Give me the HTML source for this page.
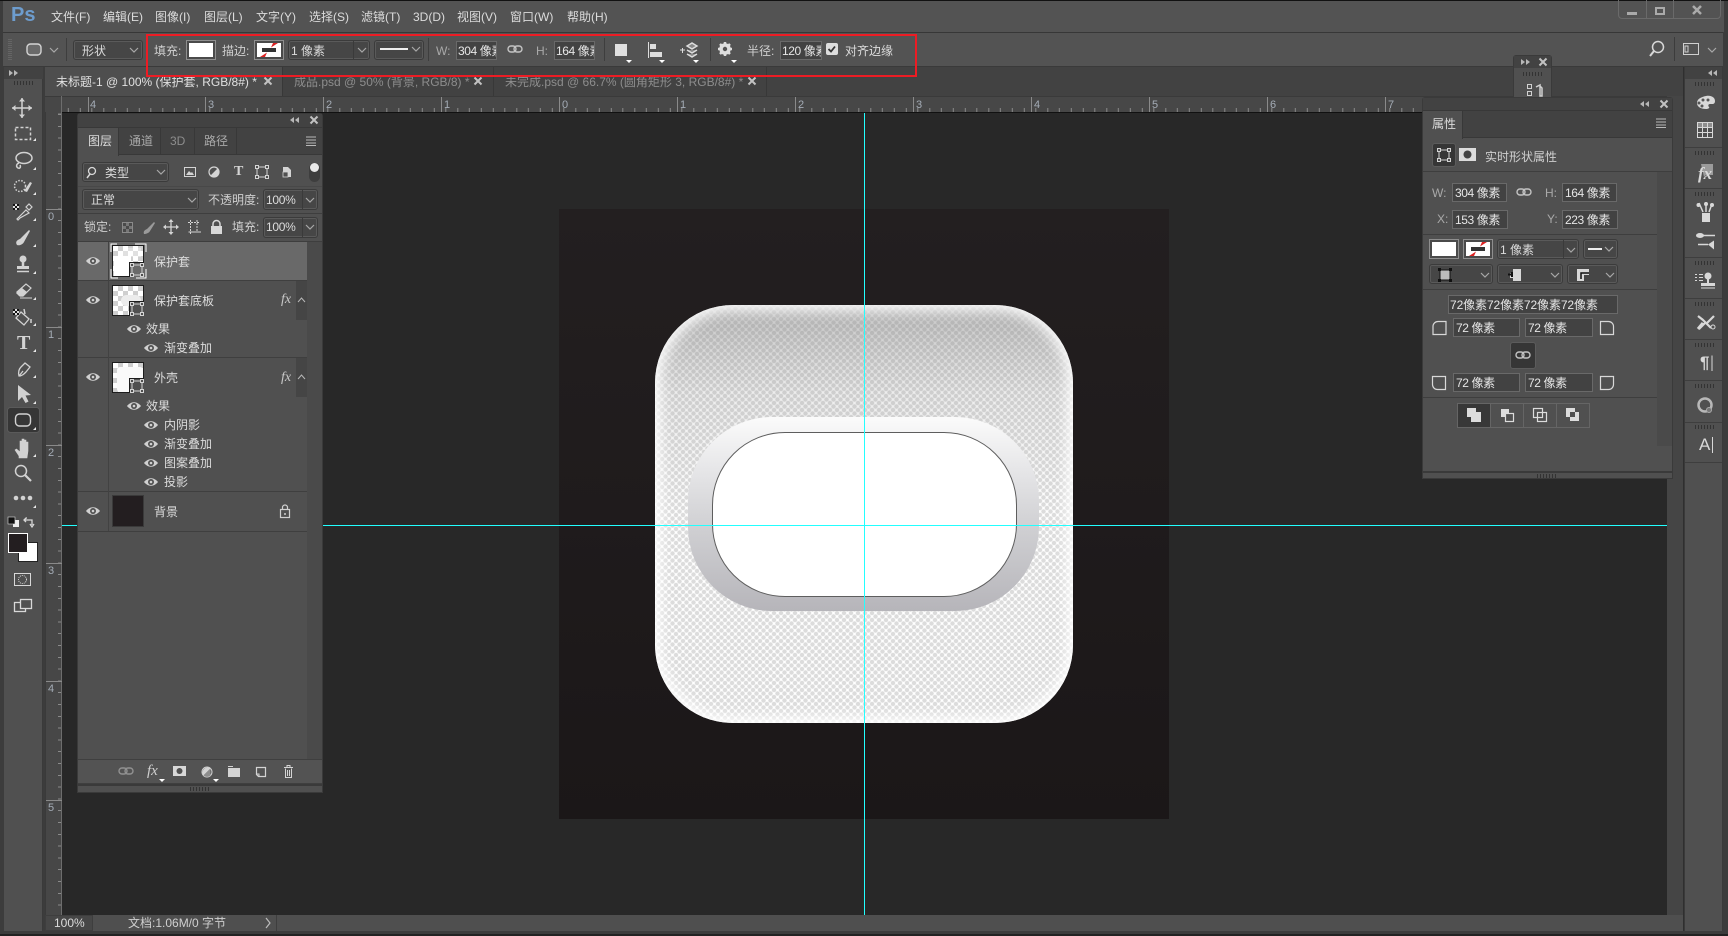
<!DOCTYPE html>
<html lang="zh"><head><meta charset="utf-8"><title>Photoshop</title>
<style>
html,body{margin:0;padding:0;width:1728px;height:936px;overflow:hidden;background:#3c3c3c}
body{position:relative;font-family:"Liberation Sans","Noto Sans CJK SC",sans-serif;font-size:12px;color:#dcdcdc}
div{position:absolute;box-sizing:border-box}
.t{white-space:nowrap;line-height:16px;height:16px}
.g{color:#a9a9a9}
.dd{background:#464646;border:1px solid #3b3b3b;border-radius:3px;box-shadow:0 0 0 1px #5a5a5a inset}
.in{background:#424242;border:1px solid #696969;overflow:hidden;white-space:nowrap;line-height:19px;padding-left:1px;color:#e6e6e6;letter-spacing:-.4px}
.sw{background:#fff;border:3px solid #4a4a4a;outline:1px solid #8e8e8e;outline-offset:-1px}
.sep{background:#3e3e3e;height:1px}
.r{font-size:11px;color:#a4acb6;line-height:12px}
.check{background:conic-gradient(#cfcfcf 25%,#fff 0 50%,#cfcfcf 0 75%,#fff 0) 0 0/10px 10px}
.th{border:1px solid #1d1d1d}
.ov{background:#505050;width:15px;height:15px;right:-1px;bottom:-1px;border-left:1px solid #1d1d1d;border-top:1px solid #1d1d1d}
.grip{height:4px;background:repeating-linear-gradient(90deg,#333 0 1px,transparent 1px 3px)}
</style></head><body>

<!-- outer frames -->
<div style="left:0;top:0;width:1728px;height:1px;background:#111"></div>
<div style="left:3px;top:1px;width:1721px;height:31px;background:#535353"></div>
<div style="left:3px;top:33px;width:1720px;height:33px;background:#535353"></div>
<div style="left:3px;top:32px;width:1720px;height:1px;background:#373737"></div>
<div style="left:3px;top:66px;width:1720px;height:1px;background:#3a3a3a"></div>

<!-- tool column -->
<div style="left:4px;top:67px;width:39px;height:864px;background:#505050;border-right:1px solid #3a3a3a"></div>
<div style="left:4px;top:67px;width:39px;height:12px;background:#424242"></div>
<div class="grip" style="left:14px;top:81px;width:20px"></div>

<!-- tabs -->
<div style="left:45px;top:67px;width:1638px;height:29px;background:#424242"></div>
<div style="left:45px;top:67px;width:237px;height:29px;background:#4e4e4e"></div>
<div style="left:282px;top:67px;width:1px;height:29px;background:#383838"></div>
<div style="left:493px;top:67px;width:1px;height:29px;background:#383838"></div>
<div style="left:766px;top:67px;width:1px;height:29px;background:#383838"></div>
<div class="t" style="left:56px;top:74px;color:#e0e0e0">未标题-1 @ 100% (保护套, RGB/8#) *</div>
<div class="t" style="left:294px;top:74px;color:#8d8d8d">成品.psd @ 50% (背景, RGB/8) *</div>
<div class="t" style="left:505px;top:74px;color:#8d8d8d">未完成.psd @ 66.7% (圆角矩形 3, RGB/8#) *</div>

<!-- rulers -->
<div style="left:45px;top:96px;width:1622px;height:16px;background:#474747;border-top:1px solid #3a3a3a"></div>
<div style="left:62px;top:108px;width:1605px;height:4px;background:repeating-linear-gradient(90deg,#8a8a8a 0 1px,transparent 1px 11.8px);background-position:5.8px 0"></div>
<div style="left:45px;top:112px;width:17px;height:803px;background:#474747;border-left:1px solid #3a3a3a"></div>
<div style="left:58px;top:112px;width:4px;height:803px;background:repeating-linear-gradient(180deg,#8a8a8a 0 1px,transparent 1px 11.8px);background-position:0 2px"></div>
<div style="left:61px;top:96px;width:1px;height:819px;background:#6d6d6d"></div>
<div style="left:88px;top:97px;width:1px;height:15px;background:#8a8a8a"></div>
<div style="left:205px;top:97px;width:1px;height:15px;background:#8a8a8a"></div>
<div style="left:323px;top:97px;width:1px;height:15px;background:#8a8a8a"></div>
<div style="left:441px;top:97px;width:1px;height:15px;background:#8a8a8a"></div>
<div style="left:559px;top:97px;width:1px;height:15px;background:#8a8a8a"></div>
<div style="left:677px;top:97px;width:1px;height:15px;background:#8a8a8a"></div>
<div style="left:795px;top:97px;width:1px;height:15px;background:#8a8a8a"></div>
<div style="left:913px;top:97px;width:1px;height:15px;background:#8a8a8a"></div>
<div style="left:1031px;top:97px;width:1px;height:15px;background:#8a8a8a"></div>
<div style="left:1149px;top:97px;width:1px;height:15px;background:#8a8a8a"></div>
<div style="left:1267px;top:97px;width:1px;height:15px;background:#8a8a8a"></div>
<div style="left:1385px;top:97px;width:1px;height:15px;background:#8a8a8a"></div>
<div class="r" style="left:90px;top:99px">4</div><div class="r" style="left:208px;top:99px">3</div><div class="r" style="left:326px;top:99px">2</div><div class="r" style="left:444px;top:99px">1</div><div class="r" style="left:562px;top:99px">0</div><div class="r" style="left:680px;top:99px">1</div><div class="r" style="left:798px;top:99px">2</div><div class="r" style="left:916px;top:99px">3</div><div class="r" style="left:1034px;top:99px">4</div><div class="r" style="left:1152px;top:99px">5</div><div class="r" style="left:1270px;top:99px">6</div><div class="r" style="left:1388px;top:99px">7</div>
<div style="left:46px;top:209px;width:16px;height:1px;background:#8a8a8a"></div><div style="left:46px;top:327px;width:16px;height:1px;background:#8a8a8a"></div><div style="left:46px;top:445px;width:16px;height:1px;background:#8a8a8a"></div><div style="left:46px;top:563px;width:16px;height:1px;background:#8a8a8a"></div><div style="left:46px;top:681px;width:16px;height:1px;background:#8a8a8a"></div><div style="left:46px;top:800px;width:16px;height:1px;background:#8a8a8a"></div>
<div class="r" style="left:48px;top:211px">0</div><div class="r" style="left:48px;top:329px">1</div><div class="r" style="left:48px;top:447px">2</div><div class="r" style="left:48px;top:565px">3</div><div class="r" style="left:48px;top:683px">4</div><div class="r" style="left:48px;top:802px">5</div>

<!-- canvas -->
<div style="left:62px;top:112px;width:1605px;height:803px;background:#282828;border-top:1px solid #111"></div>
<div style="left:1667px;top:96px;width:16px;height:835px;background:#454545"></div>
<div style="left:559px;top:209px;width:610px;height:610px;background:linear-gradient(#231f20,#1b1718)"></div>

<!-- card -->
<div style="left:655px;top:305px;width:418px;height:418px;border-radius:78px;overflow:hidden;background:#fff">
 <div style="left:0;top:0;width:418px;height:418px;background:radial-gradient(circle at center,#dcdcdc 1.8px,rgba(220,220,220,0) 2.6px) 0 0/7px 7px,radial-gradient(circle at center,#dcdcdc 1.8px,rgba(220,220,220,0) 2.6px) 3.5px 3.5px/7px 7px"></div>
 <div style="left:0;top:0;width:418px;height:210px;background:linear-gradient(rgba(120,120,120,.4) 0,rgba(120,120,120,.38) 10%,rgba(120,120,120,.14) 42%,rgba(120,120,120,0) 100%)"></div>
 <div style="left:0;top:0;width:418px;height:418px;border-radius:78px;box-shadow:inset 0 0 14px 5px #fff"></div>
</div>
<div style="left:688px;top:417px;width:351px;height:194px;border-radius:84px;background:linear-gradient(#fbfbfb,#e4e4e6 30%,#cfcfd2 58%,#b6b5ba 100%)"></div>
<div style="left:712px;top:432px;width:305px;height:165px;border-radius:73px;background:#fff;border:1px solid #5e5e5e"></div>

<!-- guides -->
<div style="left:864px;top:113px;width:1px;height:802px;background:#2ff"></div>
<div style="left:62px;top:525px;width:1605px;height:1px;background:#2ff"></div>

<!-- status bar -->
<div style="left:45px;top:915px;width:1638px;height:16px;background:#4f4f4f"></div>
<div style="left:45px;top:915px;width:48px;height:16px;background:#474747;border:1px solid #3e3e3e"></div>
<div style="left:276px;top:915px;width:1px;height:16px;background:#3e3e3e"></div>
<div class="t" style="left:54px;top:915px;color:#dcdcdc">100%</div>
<div class="t" style="left:128px;top:915px;color:#cfcfcf">文档:1.06M/0 字节</div>
<div style="left:0;top:931px;width:1728px;height:5px;background:#3c3c3c"></div>
<div style="left:0;top:934px;width:1728px;height:2px;background:#222"></div>

<!-- right dock -->
<div style="left:1683px;top:67px;width:1px;height:864px;background:#2f2f2f"></div>
<div style="left:1684px;top:67px;width:39px;height:864px;background:#505050;border-left:1px solid #3a3a3a;border-right:1px solid #3a3a3a"></div>
<div style="left:1685px;top:67px;width:37px;height:12px;background:#424242"></div>
<div class="sep" style="left:1685px;top:147px;width:37px"></div><div class="sep" style="left:1685px;top:188px;width:37px"></div><div class="sep" style="left:1685px;top:257px;width:37px"></div><div class="sep" style="left:1685px;top:298px;width:37px"></div><div class="sep" style="left:1685px;top:339px;width:37px"></div><div class="sep" style="left:1685px;top:380px;width:37px"></div><div class="sep" style="left:1685px;top:422px;width:37px"></div><div class="sep" style="left:1685px;top:462px;width:37px"></div>
<div class="grip" style="left:1695px;top:82px;width:20px"></div><div class="grip" style="left:1695px;top:151px;width:20px"></div><div class="grip" style="left:1695px;top:192px;width:20px"></div><div class="grip" style="left:1695px;top:261px;width:20px"></div><div class="grip" style="left:1695px;top:302px;width:20px"></div><div class="grip" style="left:1695px;top:343px;width:20px"></div><div class="grip" style="left:1695px;top:384px;width:20px"></div><div class="grip" style="left:1695px;top:425px;width:20px"></div>

<!-- window buttons -->
<div style="left:1618px;top:-4px;width:103px;height:23px;border:1px solid #6a6a6a;border-radius:4px"></div>
<div style="left:1646px;top:0;width:1px;height:19px;background:#6a6a6a"></div>
<div style="left:1673px;top:0;width:1px;height:19px;background:#6a6a6a"></div>
<div style="left:1674px;top:37px;width:1px;height:24px;background:#3c3c3c"></div>

<!-- mini panel -->
<div style="left:1513px;top:55px;width:39px;height:45px;background:#505050;border:1px solid #3a3a3a;border-radius:3px 3px 0 0"></div>
<div style="left:1514px;top:56px;width:37px;height:12px;background:#424242"></div>
<div class="grip" style="left:1523px;top:72px;width:20px"></div>

<!-- options bar -->
<div style="left:66px;top:38px;width:1px;height:23px;background:#3e3e3e"></div>
<div class="dd" style="left:73px;top:40px;width:70px;height:20px"></div>
<div class="t" style="left:82px;top:43px">形状</div>
<div class="t" style="left:154px;top:43px;color:#cfcfcf">填充:</div>
<div class="sw" style="left:186px;top:40px;width:30px;height:20px"></div>
<div class="t" style="left:222px;top:43px;color:#cfcfcf">描边:</div>
<div class="sw" style="left:254px;top:40px;width:30px;height:20px"></div>
<div class="dd" style="left:288px;top:40px;width:82px;height:20px"></div>
<div style="left:353px;top:41px;width:1px;height:18px;background:#3a3a3a"></div>
<div class="t" style="left:291px;top:43px">1 像素</div>
<div class="dd" style="left:374px;top:40px;width:50px;height:20px"></div>
<div style="left:428px;top:38px;width:1px;height:23px;background:#3e3e3e"></div>
<div class="t g" style="left:436px;top:43px">W:</div>
<div class="in" style="left:456px;top:41px;width:41px;height:19px;line-height:18px">304 像素</div>
<div class="t g" style="left:536px;top:43px">H:</div>
<div class="in" style="left:554px;top:41px;width:41px;height:19px;line-height:18px">164 像素</div>
<div style="left:604px;top:38px;width:1px;height:23px;background:#3e3e3e"></div>
<div style="left:710px;top:38px;width:1px;height:23px;background:#3e3e3e"></div>
<div class="t" style="left:747px;top:43px;color:#cfcfcf">半径:</div>
<div class="in" style="left:780px;top:41px;width:42px;height:19px;line-height:18px">120 像素</div>
<div class="t" style="left:845px;top:43px">对齐边缘</div>

<!-- menu -->
<div class="t" style="left:51px;top:9px">文件(F)</div>
<div class="t" style="left:103px;top:9px">编辑(E)</div>
<div class="t" style="left:155px;top:9px">图像(I)</div>
<div class="t" style="left:204px;top:9px">图层(L)</div>
<div class="t" style="left:256px;top:9px">文字(Y)</div>
<div class="t" style="left:309px;top:9px">选择(S)</div>
<div class="t" style="left:361px;top:9px">滤镜(T)</div>
<div class="t" style="left:413px;top:9px">3D(D)</div>
<div class="t" style="left:457px;top:9px">视图(V)</div>
<div class="t" style="left:510px;top:9px">窗口(W)</div>
<div class="t" style="left:567px;top:9px">帮助(H)</div>
<div class="t" style="left:11px;top:4px;height:22px;line-height:22px;font-size:20px;font-weight:bold;color:#6d9ccd">Ps</div>

<!-- layers panel -->
<div style="left:77px;top:113px;width:246px;height:680px;background:#505050;border:1px solid #3a3a3a;border-radius:3px 3px 0 0"></div>
<div style="left:78px;top:114px;width:244px;height:13px;background:#424242"></div>
<div style="left:78px;top:127px;width:244px;height:28px;background:#424242;border-top:1px solid #383838;border-bottom:1px solid #383838"></div>
<div style="left:78px;top:127px;width:41px;height:29px;background:#505050;border-top:1px solid #383838;border-right:1px solid #383838"></div>
<div style="left:160px;top:128px;width:1px;height:27px;background:#383838"></div>
<div style="left:194px;top:128px;width:1px;height:27px;background:#383838"></div>
<div style="left:236px;top:128px;width:1px;height:27px;background:#383838"></div>
<div class="t" style="left:88px;top:133px">图层</div>
<div class="t g" style="left:129px;top:133px">通道</div>
<div class="t" style="left:170px;top:133px;color:#8d8d8d">3D</div>
<div class="t g" style="left:204px;top:133px">路径</div>
<div class="dd" style="left:82px;top:162px;width:87px;height:20px"></div>
<div class="t" style="left:105px;top:165px">类型</div>
<div style="left:309px;top:163px;width:11px;height:19px;background:#3e3e3e;border-radius:6px"></div>
<div style="left:310px;top:163px;width:9px;height:9px;background:#e8e8e8;border-radius:50%"></div>
<div class="sep" style="left:78px;top:186px;width:244px;background:#484848"></div>
<div class="dd" style="left:82px;top:189px;width:117px;height:21px"></div>
<div class="t" style="left:91px;top:192px">正常</div>
<div class="t" style="left:208px;top:192px;color:#cfcfcf">不透明度:</div>
<div class="dd" style="left:263px;top:189px;width:55px;height:21px"></div>
<div style="left:302px;top:190px;width:1px;height:19px;background:#3a3a3a"></div>
<div class="t" style="left:266px;top:192px;letter-spacing:-.3px">100%</div>
<div class="sep" style="left:78px;top:213px;width:244px"></div>
<div class="t" style="left:84px;top:219px;color:#cfcfcf">锁定:</div>
<div class="t" style="left:232px;top:219px;color:#cfcfcf">填充:</div>
<div class="dd" style="left:263px;top:217px;width:55px;height:21px"></div>
<div style="left:302px;top:218px;width:1px;height:19px;background:#3a3a3a"></div>
<div class="t" style="left:266px;top:219px;letter-spacing:-.3px">100%</div>
<div class="sep" style="left:78px;top:241px;width:244px"></div>
<!-- scroll col -->
<div style="left:307px;top:242px;width:15px;height:517px;background:#4a4a4a"></div>
<!-- rows -->
<div style="left:78px;top:242px;width:229px;height:38px;background:#696969"></div>
<div style="left:78px;top:280px;width:229px;height:1px;background:#3f3f3f"></div>
<div style="left:78px;top:357px;width:229px;height:1px;background:#3f3f3f"></div>
<div style="left:78px;top:491px;width:229px;height:1px;background:#3f3f3f"></div>
<div style="left:78px;top:531px;width:229px;height:1px;background:#3f3f3f"></div>
<div style="left:108px;top:242px;width:1px;height:289px;background:#424242"></div>
<div style="left:296px;top:281px;width:11px;height:39px;background:#454545"></div>
<div style="left:296px;top:358px;width:11px;height:39px;background:#454545"></div>

<div class="th check" style="left:112px;top:245px;width:32px;height:32px"><div style="left:1px;top:10px;width:17px;height:20px;background:#fff"></div><div style="left:10px;top:2px;width:18px;height:9px;background:rgba(255,255,255,.35)"></div><div class="ov" style="background:#696969"></div></div>
<div class="th check" style="left:112px;top:285px;width:32px;height:31px"><div style="left:8px;top:9px;width:20px;height:11px;background:#ececec;border-radius:8px"></div><div class="ov"></div></div>
<div class="th check" style="left:112px;top:362px;width:32px;height:31px"><div style="left:4px;top:4px;width:26px;height:25px;background:#fafafa;border-radius:3px"></div><div class="ov"></div></div>
<div class="th" style="left:112px;top:495px;width:32px;height:32px;background:#231e20;border-color:#3a3a3a"></div>

<div class="t" style="left:154px;top:254px">保护套</div>
<div class="t" style="left:154px;top:293px">保护套底板</div>
<div class="t" style="left:146px;top:321px">效果</div>
<div class="t" style="left:164px;top:340px">渐变叠加</div>
<div class="t" style="left:154px;top:370px">外壳</div>
<div class="t" style="left:146px;top:398px">效果</div>
<div class="t" style="left:164px;top:417px">内阴影</div>
<div class="t" style="left:164px;top:436px">渐变叠加</div>
<div class="t" style="left:164px;top:455px">图案叠加</div>
<div class="t" style="left:164px;top:474px">投影</div>
<div class="t" style="left:154px;top:504px">背景</div>
<div class="t" style="left:281px;top:292px;font:italic 14px 'Liberation Serif',serif;line-height:16px;color:#c8c8c8">fx</div>
<div class="t" style="left:281px;top:370px;font:italic 14px 'Liberation Serif',serif;line-height:16px;color:#c8c8c8">fx</div>
<div style="left:78px;top:759px;width:244px;height:25px;background:#535353;border-top:1px solid #3f3f3f;border-bottom:1px solid #3f3f3f"></div>
<div style="left:78px;top:784px;width:244px;height:2px;background:#3a3a3a"></div>
<div class="grip" style="left:190px;top:787px;width:20px"></div>
<div class="t" style="left:147px;top:763px;font:italic 15px 'Liberation Serif',serif;line-height:16px;color:#d0d0d0">fx</div>

<!-- properties panel -->
<div style="left:1422px;top:97px;width:251px;height:382px;background:#505050;border:1px solid #3a3a3a;border-radius:3px 3px 0 0"></div>
<div style="left:1423px;top:98px;width:249px;height:12px;background:#424242"></div>
<div style="left:1423px;top:110px;width:249px;height:28px;background:#424242;border-top:1px solid #383838;border-bottom:1px solid #383838"></div>
<div style="left:1423px;top:110px;width:40px;height:29px;background:#505050;border-top:1px solid #383838;border-right:1px solid #383838"></div>
<div class="t" style="left:1432px;top:116px">属性</div>
<div style="left:1432px;top:143px;width:24px;height:24px;background:#363636;border:1px solid #5c5c5c;border-radius:3px"></div>
<div style="left:1459px;top:148px;width:17px;height:13px;background:#dcdcdc"></div>
<div class="t g" style="left:1485px;top:149px;color:#cfcfcf">实时形状属性</div>
<div class="sep" style="left:1423px;top:171px;width:249px"></div>
<div style="left:1657px;top:172px;width:15px;height:274px;background:#4a4a4a"></div>
<div class="t g" style="left:1432px;top:185px">W:</div>
<div class="in" style="left:1452px;top:183px;width:55px;height:19px;padding-left:2px">304 像素</div>
<div class="t g" style="left:1545px;top:185px">H:</div>
<div class="in" style="left:1562px;top:183px;width:55px;height:19px;padding-left:2px">164 像素</div>
<div class="t g" style="left:1437px;top:211px">X:</div>
<div class="in" style="left:1452px;top:210px;width:56px;height:19px;padding-left:2px">153 像素</div>
<div class="t g" style="left:1547px;top:211px">Y:</div>
<div class="in" style="left:1562px;top:210px;width:56px;height:19px;padding-left:2px">223 像素</div>
<div class="sep" style="left:1423px;top:234px;width:234px"></div>
<div class="sw" style="left:1429px;top:239px;width:30px;height:20px"></div>
<div class="sw" style="left:1463px;top:239px;width:30px;height:20px"></div>
<div class="dd" style="left:1497px;top:239px;width:82px;height:20px"></div>
<div style="left:1563px;top:240px;width:1px;height:18px;background:#3a3a3a"></div>
<div class="t" style="left:1500px;top:242px">1 像素</div>
<div class="dd" style="left:1583px;top:239px;width:35px;height:20px"></div>
<div class="dd" style="left:1429px;top:264px;width:64px;height:20px"></div>
<div class="dd" style="left:1497px;top:264px;width:66px;height:20px"></div>
<div class="dd" style="left:1567px;top:264px;width:51px;height:20px"></div>
<div class="sep" style="left:1423px;top:289px;width:234px"></div>
<div class="in" style="left:1448px;top:295px;width:170px;height:19px;letter-spacing:-.1px">72像素72像素72像素72像素</div>
<div class="in" style="left:1453px;top:318px;width:67px;height:19px;padding-left:2px">72 像素</div>
<div class="in" style="left:1525px;top:318px;width:68px;height:19px;padding-left:2px">72 像素</div>
<div style="left:1510px;top:342px;width:26px;height:27px;background:#363636;border:1px solid #5c5c5c;border-radius:3px"></div>
<div class="in" style="left:1453px;top:373px;width:67px;height:19px;padding-left:2px">72 像素</div>
<div class="in" style="left:1525px;top:373px;width:68px;height:19px;padding-left:2px">72 像素</div>
<div class="sep" style="left:1423px;top:397px;width:234px"></div>
<div style="left:1457px;top:403px;width:133px;height:25px;background:#505050;border:1px solid #656565"></div>
<div style="left:1458px;top:404px;width:32px;height:23px;background:#383838"></div>
<div style="left:1490px;top:404px;width:1px;height:23px;background:#656565"></div>
<div style="left:1523px;top:404px;width:1px;height:23px;background:#656565"></div>
<div style="left:1556px;top:404px;width:1px;height:23px;background:#656565"></div>
<div style="left:1423px;top:471px;width:249px;height:2px;background:#3a3a3a"></div>
<div class="grip" style="left:1537px;top:474px;width:20px"></div>

<!-- dock text icons -->
<div class="t" style="left:1698px;top:166px;font:italic bold 17px 'Liberation Serif',serif;line-height:16px;color:#d8d8d8">fx</div>
<div class="t" style="left:1700px;top:355px;font:bold 17px 'Liberation Sans',sans-serif;line-height:16px;color:#d8d8d8">¶</div>
<div class="t" style="left:1699px;top:437px;font:17px 'Liberation Sans',sans-serif;line-height:16px;color:#d8d8d8">A</div>
<div class="t" style="left:17px;top:334px;height:18px;font:bold 20px 'Liberation Serif',serif;line-height:18px;color:#d4d4d4">T</div>
<div class="t" style="left:234px;top:164px;font:bold 14px 'Liberation Serif',serif;line-height:16px;color:#d4d4d4">T</div>

<!-- icon overlay -->
<svg width="1728" height="936" viewBox="0 0 1728 936" style="position:absolute;left:0;top:0" fill="none" stroke-linecap="butt">
<defs>
<g id="eye"><path d="M-7 0C-3-5 3-5 7 0C3 5-3 5-7 0Z" fill="#d0d0d0"/><circle r="3" fill="#505050"/><circle r="1.3" fill="#d0d0d0"/></g>
<path id="chev" d="M-4-2L0 2L4-2" stroke="#a8a8a8" stroke-width="1.2" fill="none"/>
<g id="xx" stroke="#c2c2c2" stroke-width="2"><path d="M-3.5-3.5L3.5 3.5M3.5-3.5L-3.5 3.5"/></g>
<g id="rr" fill="#b8b8b8"><path d="M-1-3L-5 0L-1 3Z"/><path d="M4-3L0 0L4 3Z"/></g>
<g id="ll" fill="#b8b8b8"><path d="M-4-3L0 0L-4 3Z"/><path d="M1-3L5 0L1 3Z"/></g>
<g id="link" stroke="#c4c4c4" stroke-width="1.4"><rect x="-7" y="-3" width="8" height="6" rx="3"/><rect x="-1" y="-3" width="8" height="6" rx="3"/></g>
<g id="stroke"><rect x="-12" y="-7" width="24" height="14" fill="#fff"/><rect x="-7" y="-2" width="14" height="4" fill="#333"/><path d="M4-7L9-7L2-2.500ZM-4 7L-9 7L-2 2.500Z" fill="#d22"/></g>
<g id="menu3" stroke="#b8b8b8"><path d="M-5-3.5H5M-5-.5H5M-5 2.5H5M-5 5H5" transform="translate(0 -.5)"/></g>
<path id="tri" d="M3 0V3H0Z" fill="#e8e8e8"/>
<g id="tt" fill="#fff"><path d="M-3 0H3L0 3Z"/></g>
<g id="sh" stroke="#d4d4d4" fill="none"><rect x="-5" y="-5" width="10" height="10"/><g fill="#505050"><rect x="-6.5" y="-6.5" width="3" height="3"/><rect x="3.5" y="-6.5" width="3" height="3"/><rect x="-6.5" y="3.5" width="3" height="3"/><rect x="3.5" y="3.5" width="3" height="3"/></g></g>
</defs>

<!-- options icons -->
<g stroke="#777"><path d="M9 39V60" stroke-dasharray="1 1"/><path d="M11 39V60" stroke-dasharray="1 1"/></g>
<rect x="27" y="44" width="14" height="11" rx="3.5" fill="#6a6a6a" stroke="#d4d4d4" stroke-width="1.4"/>
<use href="#chev" x="54" y="50"/><use href="#chev" x="134" y="50"/><use href="#chev" x="362" y="50"/><use href="#chev" x="416" y="49"/>
<use href="#link" x="515" y="49"/>
<use href="#stroke" x="269" y="50"/>
<path d="M380 49H408" stroke="#eee" stroke-width="2"/>
<rect x="615" y="44" width="12" height="12" fill="#e0e0e0"/><use href="#tt" x="629" y="60"/>
<path d="M648.5 42V58" stroke="#ddd"/><rect x="650" y="44" width="6" height="5" fill="#ddd"/><rect x="650" y="52" width="12" height="5" fill="#ddd"/><use href="#tt" x="662" y="60"/>
<path d="M680 50h5M682.500 48v5" stroke="#ddd"/><path d="M687 46l5-3 5 3-5 3zM687 50l5 3 5-3M687 54l5 3 5-3" stroke="#ddd" stroke-width="1.4" fill="#888"/><use href="#tt" x="696" y="60"/>
<g transform="translate(725 49)"><circle r="4.300" stroke="#ddd" stroke-width="3"/><path d="M0-7V7M-7 0H7M-5-5L5 5M5-5L-5 5" stroke="#ddd" stroke-width="2.500"/><circle r="2.200" fill="#535353"/></g><use href="#tt" x="734" y="60"/>
<rect x="826" y="43" width="12" height="12" rx="2" fill="#ddd"/><path d="M828.500 49l2.500 2.500 4-5" stroke="#333" stroke-width="1.800"/>
<!-- right of options -->
<circle cx="1658" cy="47" r="5.500" stroke="#d8d8d8" stroke-width="1.500"/><path d="M1654 51L1650 56" stroke="#d8d8d8" stroke-width="2"/>
<rect x="1683.500" y="43.500" width="15" height="11" stroke="#d0d0d0"/><rect x="1685" y="46" width="3" height="6" stroke="#d0d0d0"/>
<use href="#chev" x="1712" y="50"/>
<!-- window -->
<path d="M1627 13.500H1637" stroke="#aaa" stroke-width="3"/>
<rect x="1656" y="8" width="8" height="6" stroke="#aaa" stroke-width="2"/>
<path d="M1693 6L1701 14M1701 6L1693 14" stroke="#aaa" stroke-width="2.500"/>
<!-- tab close -->
<use href="#xx" x="268" y="81"/><use href="#xx" x="478" y="81"/><use href="#xx" x="752" y="81"/>
<!-- status arrow -->
<path d="M266 918L270 923L266 928" stroke="#bdbdbd" stroke-width="1.200"/>
<!-- head arrows -->
<use href="#ll" x="13" y="73"/><use href="#ll" x="1525" y="62"/><use href="#xx" x="1543" y="62"/>
<use href="#rr" x="1713" y="73"/><use href="#rr" x="1645" y="104"/><use href="#xx" x="1664" y="104"/>
<use href="#rr" x="295" y="120"/><use href="#xx" x="314" y="120"/>
<use href="#menu3" x="311" y="141"/><use href="#menu3" x="1661" y="123"/>

<!-- tools -->
<g stroke="#d2d2d2" stroke-width="1.500">
<path d="M22 98V118M12 108H32"/><path d="M22 98l-3 3.500h6zM22 118l-3-3.500h6zM12 108l3.500-3v6zM32 108l-3.500-3v6z" fill="#d2d2d2" stroke="none"/>
<rect x="15.500" y="127.500" width="15" height="12" stroke-dasharray="3 2"/>
<ellipse cx="24" cy="158" rx="8" ry="5.500"/><path d="M19 163c-3 1-3 4-1 5s3-1 2-3"/>
<circle cx="20" cy="186" r="5.500" stroke-dasharray="1.500 1.500"/>
<path d="M24 191l6-9 2 1-5 9z" fill="#d2d2d2" stroke="none"/>
<path d="M20 218l-2 2-1-1 2-2 7-7 3 3zM26 207l3-3 3 3-3 3z" stroke-width="1.200"/>
<path d="M17 245c-2-3 0-5 3-6l9-9 1 1-6 11c-1 2-4 4-7 3z" fill="#d2d2d2" stroke="none"/>
<circle cx="23" cy="259" r="3.500" fill="#d2d2d2" stroke="none"/><path d="M23 262V266" stroke-width="2.500"/><rect x="17" y="266" width="12" height="3" fill="#d2d2d2" stroke="none"/><path d="M17 271.500H29" />
<path d="M17 292l9-8 5 4-8 8h-3z" stroke-width="1.200"/><path d="M22 288l5 4-4 4h-4l-3-3z" fill="#d2d2d2" stroke="none"/><path d="M20 298H32" stroke-width="1"/>
<path d="M21 312l8 7-5 6-8-7z" stroke-width="1.300"/><path d="M24 309l1 5M31 319v4" stroke-width="1.500"/>
<path d="M19 376c-1-4 0-7 2-9l4-4 5 4-4 5c-2 2-4 4-7 4zM19 376l4-5" stroke-width="1.300"/>
<path d="M18 385V401L22 397L25.500 403L28.500 401.500L25.500 395.500L31 395Z" fill="#d2d2d2" stroke="none"/>
</g>
<rect x="7.500" y="407.500" width="32" height="25" rx="3" fill="#363636" stroke="#5a5a5a"/>
<rect x="15.500" y="414" width="15" height="12" rx="4" stroke="#d2d2d2" stroke-width="1.400"/>
<path d="M19 456l-4-6 1.500-1 3.500 3V441h2v7 -9h2v9 -8h2v8 -6h2v9l-1 7h-8z" fill="#d2d2d2" stroke="#d2d2d2" stroke-width=".6"/>
<circle cx="21" cy="471" r="5.500" stroke="#d2d2d2" stroke-width="1.500"/><path d="M25 475L31 481" stroke="#d2d2d2" stroke-width="2.200"/>
<circle cx="16" cy="498" r="2.300" fill="#d2d2d2"/><circle cx="23" cy="498" r="2.300" fill="#d2d2d2"/><circle cx="30" cy="498" r="2.300" fill="#d2d2d2"/>
<use href="#tri" x="33" y="138"/><use href="#tri" x="33" y="167"/><use href="#tri" x="33" y="192"/><use href="#tri" x="33" y="218"/><use href="#tri" x="33" y="244"/><use href="#tri" x="33" y="271"/><use href="#tri" x="33" y="297"/><use href="#tri" x="33" y="323"/><use href="#tri" x="33" y="349"/><use href="#tri" x="33" y="375"/><use href="#tri" x="33" y="401"/><use href="#tri" x="33" y="427"/><use href="#tri" x="33" y="454"/><use href="#tri" x="33" y="505"/>
<!-- small checker -->
<rect x="13" y="204" width="6" height="6" fill="#ddd"/><path d="M13 204h2v2h-2zM15 206h2v2h-2zM17 204h2v2h-2zM13 208h2v2h-2zM17 208h2v2h-2z" fill="#111"/>
<rect x="13" y="309" width="6" height="6" fill="#ddd"/><path d="M13 309h2v2h-2zM15 311h2v2h-2zM17 309h2v2h-2zM13 313h2v2h-2zM17 313h2v2h-2z" fill="#111"/>
<!-- swatches -->
<rect x="13" y="520" width="6" height="7" fill="#eee" /><rect x="8" y="517" width="7" height="7" fill="#111" stroke="#ddd" stroke-width=".6"/>
<path d="M27 518h-1l-2 2 2 2M25 520h7v5M30 524l2 3 2-3" stroke="#d8d8d8" stroke-width="1.300"/>
<rect x="18.500" y="542.500" width="19" height="19" fill="#fff" stroke="#222"/>
<rect x="8.500" y="533.500" width="19" height="19" fill="#231e20" stroke="#fff"/>
<rect x="14.500" y="573.500" width="16" height="12" stroke="#d8d8d8"/><circle cx="22.500" cy="579.500" r="4" stroke="#d8d8d8" stroke-dasharray="1 1"/>
<rect x="14.500" y="602.500" width="11" height="9" stroke="#d8d8d8" stroke-width="1.300"/><rect x="20.500" y="599.500" width="11" height="9" fill="#505050" stroke="#d8d8d8" stroke-width="1.300"/>

<!-- layers icons -->
<circle cx="92" cy="171" r="3.500" stroke="#d8d8d8" stroke-width="1.300"/><path d="M90 174L87 178" stroke="#d8d8d8" stroke-width="1.500"/>
<use href="#chev" x="161" y="172"/><use href="#chev" x="192" y="200"/><use href="#chev" x="310" y="200"/><use href="#chev" x="310" y="227"/>
<rect x="184.500" y="167.500" width="11" height="9" stroke="#d4d4d4"/><path d="M186 175l3-4 2 2 1-1 2 3z" fill="#d4d4d4"/>
<circle cx="214" cy="172" r="5" fill="#505050" stroke="#d4d4d4" stroke-width="1.200"/><path d="M214 177a5 5 0 0 1 0-10a5 5 0 0 1 3.500 1.500L210.500 175.500a5 5 0 0 0 3.500 1.500z" fill="#d4d4d4" transform="rotate(180 214 172)"/>
<use href="#sh" x="262" y="172"/>
<path d="M283 177V167h5l3 3v7z" fill="#d4d4d4"/><rect x="283" y="172" width="5" height="5" fill="#505050" stroke="#d4d4d4" stroke-width=".8"/>
<!-- lock row -->
<rect x="122.500" y="222.500" width="10" height="10" fill="#777" stroke="#8a8a8a"/><path d="M123 223h3v3h-3zM129 223h3v3h-3zM126 226h3v3h-3zM123 229h3v3h-3zM129 229h3v3h-3z" fill="#4a4a4a"/>
<path d="M144 234c-1-3 1-4 3-5l7-7 1 1-5 8c-1 2-4 3-6 3z" fill="#9a9a9a"/>
<path d="M171 220V234M164 227H178" stroke="#d4d4d4" stroke-width="1.300"/><path d="M171 219l-2.500 3h5zM171 235l-2.500-3h5zM163 227l3-2.500v5zM179 227l-3-2.500v5z" fill="#d4d4d4"/>
<path d="M188 222.500H199M190.500 220V234M197 220v12" stroke="#d4d4d4" stroke-dasharray="2 1"/><path d="M188.500 232H201" stroke="#d4d4d4"/>
<rect x="211" y="226" width="11" height="8" fill="#d8d8d8"/><path d="M213 226v-2a3.500 3.500 0 0 1 7 0v2" stroke="#d8d8d8" stroke-width="1.500"/>
<!-- selection brackets -->
<path d="M117 244H111V252M135 244H146V252M111 269V278H118M146 269V278H136" stroke="#fff"/>
<use href="#sh" x="137" y="270"/><use href="#sh" x="137" y="309"/><use href="#sh" x="137" y="386"/>
<!-- eyes -->
<use href="#eye" x="93" y="261"/><use href="#eye" x="93" y="300"/><use href="#eye" x="134" y="329"/><use href="#eye" x="151" y="348"/><use href="#eye" x="93" y="377"/><use href="#eye" x="134" y="406"/><use href="#eye" x="151" y="425"/><use href="#eye" x="151" y="444"/><use href="#eye" x="151" y="463"/><use href="#eye" x="151" y="482"/><use href="#eye" x="93" y="511"/>
<path d="M298 302l3.500-4 3.500 4M298 379l3.500-4 3.500 4" stroke="#b8b8b8"/>
<g transform="translate(0 2)"><rect x="280.500" y="507.500" width="9" height="8" stroke="#d0d0d0" stroke-width="1.200"/><path d="M282.500 507.500v-2a2.500 2.500 0 0 1 5 0v2" stroke="#d0d0d0" stroke-width="1.200"/><circle cx="285" cy="512" r="1" fill="#d0d0d0"/></g>
<!-- layers bottom -->
<g transform="translate(126 771)" opacity=".55"><use href="#link"/></g>
<use href="#tt" x="162" y="779" /><use href="#tt" x="216" y="779"/>
<rect x="173" y="766" width="13" height="10" fill="#d8d8d8"/><circle cx="179.500" cy="771" r="3" fill="#505050"/>
<circle cx="207" cy="772" r="5" stroke="#d4d4d4"/><path d="M203.500 775.500a5 5 0 0 1 7-7z" fill="#d4d4d4"/><path d="M210.500 775.500a5 5 0 0 1-7 0l7-7z" fill="#8d8d8d"/>
<path d="M228 768h12v9h-12zM228 766h6" stroke="none" fill="#d4d4d4"/><path d="M228 766.500h5" stroke="#d4d4d4"/>
<path d="M256.500 767.500h9v9h-7l-2-2z" stroke="#d4d4d4" stroke-width="1.200"/><path d="M256.500 774h2.500v2.500" stroke="#d4d4d4"/>
<path d="M284 767.500h9M285.500 768.500v9h6v-9M287.500 770v6M289.500 770v6M287 767v-1.500h3v1.500" stroke="#d4d4d4"/>

<!-- properties icons -->
<use href="#sh" x="1444" y="155"/>
<circle cx="1467.500" cy="154.500" r="4" fill="#444"/>
<use href="#link" x="1524" y="192"/>
<use href="#stroke" x="1478" y="249"/>
<use href="#chev" x="1571" y="250"/><use href="#chev" x="1609" y="249"/><use href="#chev" x="1485" y="275"/><use href="#chev" x="1555" y="275"/><use href="#chev" x="1610" y="275"/>
<path d="M1588 249H1602" stroke="#eee" stroke-width="2"/>
<g transform="translate(1445 275)"><rect x="-5" y="-5" width="10" height="10" fill="#bbb" stroke="#111"/><rect x="-7" y="-7" width="3" height="3" fill="#111"/><rect x="4" y="-7" width="3" height="3" fill="#111"/><rect x="-7" y="4" width="3" height="3" fill="#111"/><rect x="4" y="4" width="3" height="3" fill="#111"/></g>
<path d="M1513 269h8v12h-8v-3h-3v-5h3z" fill="#d8d8d8"/><path d="M1508 274.500h5M1512 272v5" stroke="#111" stroke-width="2"/>
<path d="M1577 269h12v6h-5v6h-7z" fill="#d8d8d8"/><path d="M1589 273h-8v6" stroke="#111" stroke-width="1.500"/>
<g stroke="#d8d8d8" stroke-width="1.200">
<path d="M1438 321.500h8v13h-13v-8a5 5 0 0 1 5-5z"/><path d="M1600.500 321.500h8a5 5 0 0 1 5 5v8h-13z"/>
<path d="M1432.500 376.500h13v13h-8a5 5 0 0 1-5-5z"/><path d="M1600.500 376.500h13v8a5 5 0 0 1-5 5h-8z"/>
</g>
<use href="#link" x="1523" y="355"/>
<g fill="#dcdcdc"><rect x="1467" y="408" width="9" height="9"/><rect x="1471" y="412" width="10" height="10"/></g>
<rect x="1501" y="409" width="8" height="8" fill="#dcdcdc"/><rect x="1505.500" y="413.500" width="8" height="8" fill="#505050" stroke="#dcdcdc" stroke-width="1.200"/>
<rect x="1533.500" y="408.500" width="9" height="9" stroke="#dcdcdc" stroke-width="1.200"/><rect x="1537.500" y="412.500" width="9" height="9" stroke="#dcdcdc" stroke-width="1.200"/>
<rect x="1566" y="408" width="9" height="9" fill="#dcdcdc"/><rect x="1570" y="412" width="9" height="9" fill="#dcdcdc"/><rect x="1570" y="412" width="5" height="5" fill="#505050"/>

<!-- mini icons -->
<rect x="1527.500" y="84.500" width="4" height="4" stroke="#d0d0d0"/><rect x="1527.500" y="91.500" width="4" height="4" stroke="#d0d0d0"/><path d="M1536 87l4-2v11h2v-8l-3-3" stroke="#d0d0d0" stroke-width="1.500"/>

<!-- dock icons -->
<path d="M1706 96c6-1 9 2 9 5s-2 3-3 3h-2c-2 0-2 2-1 3s-1 2-3 2c-5 0-9-2-9-6s4-6 9-7z" fill="#d8d8d8"/><circle cx="1699" cy="103" r="1.500" fill="#555"/><circle cx="1703" cy="100" r="1.500" fill="#555"/><circle cx="1708" cy="100" r="1.500" fill="#555"/><circle cx="1702" cy="106" r="1.500" fill="#555"/>
<rect x="1697.500" y="122.500" width="15" height="15" stroke="#d8d8d8"/><path d="M1702.500 122.500V137.500M1707.500 122.500V137.500M1697.500 127.500H1712.500M1697.500 132.500H1712.500" stroke="#d8d8d8"/><rect x="1698" y="123" width="4" height="4" fill="#8e8e8e"/><rect x="1703" y="123" width="4" height="4" fill="#8e8e8e"/><rect x="1708" y="123" width="4" height="4" fill="#8e8e8e"/>
<path d="M1701 164h12v11h-7l-2 2" fill="#d8d8d8" opacity=".55"/>
<rect x="1702" y="213" width="8" height="9" fill="#d8d8d8"/><path d="M1703 212l-4-9M1706 212v-10M1709 212l3-8" stroke="#d8d8d8" stroke-width="1.500"/><circle cx="1698.500" cy="205" r="2" fill="#d8d8d8"/><circle cx="1706" cy="204" r="2" fill="#d8d8d8"/><circle cx="1712" cy="205" r="2" fill="#d8d8d8"/>
<path d="M1702 235.500H1715M1698 244.500H1708" stroke="#d8d8d8" stroke-width="1.500"/><ellipse cx="1700" cy="235.500" rx="4" ry="2.500" fill="#d8d8d8"/><path d="M1708 244.500l6-4v9z" fill="#d8d8d8"/>
<path d="M1695 274.500h2M1695 277.500h2M1695 280.500h2M1699 274.500h4M1699 277.500h4M1699 280.500h4" stroke="#d8d8d8"/><circle cx="1708" cy="276" r="3.500" fill="#d8d8d8"/><path d="M1708 279v5" stroke="#d8d8d8" stroke-width="2"/><rect x="1701" y="283" width="14" height="3" fill="#d8d8d8"/><path d="M1701 288H1715" stroke="#d8d8d8"/>
<path d="M1698 316l5 4M1711 328l-9-9M1714 316l-7 7M1699 329l6-6" stroke="#d8d8d8" stroke-width="2.200"/><circle cx="1713" cy="327" r="2" stroke="#d8d8d8"/><path d="M1703 323l-5 6" stroke="#d8d8d8" stroke-width="3"/>
<path d="M1712 355.500V371" stroke="#d8d8d8"/>
<circle cx="1705" cy="405" r="6.500" stroke="#b8b8b8" stroke-width="2.500"/><circle cx="1709" cy="410" r="2.500" fill="#777" stroke="#aaa"/>
<path d="M1712.500 437V453" stroke="#d8d8d8"/>
</svg>

<!-- red annotation -->
<div style="left:146px;top:34px;width:771px;height:43px;border:2px solid #ed1c24"></div>
</body></html>
